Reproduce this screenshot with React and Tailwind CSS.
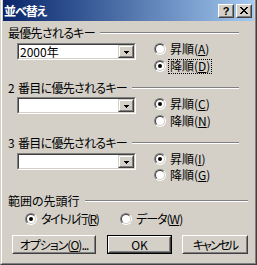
import React from 'react';

function Sunken({ className = '', children }) {
  return (
    <div className={`flex border border-t-[#808080] border-l-[#808080] border-r-white border-b-white ${className}`}>
      <div className="flex flex-1 border border-t-[#404040] border-l-[#404040] border-r-[#d4d0c8] border-b-[#d4d0c8] bg-white">
        {children}
      </div>
    </div>
  );
}

function Arrow() {
  return (
    <svg width="5" height="3" viewBox="0 0 5 3" shapeRendering="crispEdges">
      <rect x="0" y="0" width="5" height="1" fill="#000" />
      <rect x="1" y="1" width="3" height="1" fill="#000" />
      <rect x="2" y="2" width="1" height="1" fill="#000" />
    </svg>
  );
}

function Combo({ value }) {
  return (
    <Sunken className="w-[119px] h-[17px] shrink-0">
      <span className="flex-1 pl-[1px] text-[12px] leading-[13px]">{value}</span>
      <div className="w-[16px] flex border border-t-[#d4d0c8] border-l-[#d4d0c8] border-r-[#404040] border-b-[#404040]">
        <div className="flex-1 flex items-center justify-center pt-[2px] bg-[#d4d0c8] border border-t-white border-l-white border-r-[#808080] border-b-[#808080]">
          <Arrow />
        </div>
      </div>
    </Sunken>
  );
}

function Radio({ checked, focused, labelClass = '', children }) {
  return (
    <div className="flex items-center h-[12px]">
      <span className="relative w-[12px] h-[12px] shrink-0 rounded-full border border-t-[#808080] border-l-[#808080] border-r-white border-b-white">
        <span className="absolute inset-0 flex items-center justify-center rounded-full bg-white border border-t-[#404040] border-l-[#404040] border-r-[#d4d0c8] border-b-[#d4d0c8]">
          {checked && <span className="w-[4px] h-[4px] rounded-full bg-black" />}
        </span>
      </span>
      {focused ? (
        <span className={`ml-[2px] px-[1px] h-[15px] flex items-center border border-dotted border-black whitespace-nowrap ${labelClass}`}>{children}</span>
      ) : (
        <span className={`ml-[4px] whitespace-nowrap ${labelClass}`}>{children}</span>
      )}
    </div>
  );
}

function GroupHeader({ label, labelClass = '', className = '' }) {
  return (
    <div className={`flex items-center ml-[5px] h-[14px] ${className}`}>
      <span className={`whitespace-nowrap ${labelClass}`}>{label}</span>
      <span className="flex-1 ml-[5px] h-[2px] border-t border-t-[#808080] border-b border-b-white" />
    </div>
  );
}

function Button({ isDefault, className = '', children }) {
  const face = (
    <div className="flex-1 flex border border-t-white border-l-white border-r-[#404040] border-b-[#404040]">
      <div className="flex-1 flex items-center justify-center bg-[#d4d0c8] border border-t-[#d4d0c8] border-l-[#d4d0c8] border-r-[#808080] border-b-[#808080]">
        {children}
      </div>
    </div>
  );
  return (
    <div className={`flex h-[19px] ${isDefault ? 'border border-black' : ''} ${className}`}>{face}</div>
  );
}

function TitleButton({ children }) {
  return (
    <div className="w-[16px] h-[14px] flex border border-t-white border-l-white border-r-[#404040] border-b-[#404040]">
      <div className="flex-1 flex items-center justify-center bg-[#d4d0c8] border border-t-[#d4d0c8] border-l-[#d4d0c8] border-r-[#808080] border-b-[#808080]">
        {children}
      </div>
    </div>
  );
}

export default function App() {
  return (
    <div className="w-[257px] h-[265px] flex bg-[#d4d0c8] text-black text-[12px] leading-[14px] font-['Noto_Sans_CJK_JP',sans-serif] [font-feature-settings:'palt'] border-l border-l-[#d4d0c8] border-r border-r-[#404040] border-b border-b-[#404040]">
      <div className="flex-1 flex flex-col pl-[1px] pr-[1px] pb-[1px] border-l border-l-white border-r border-r-[#808080] border-b border-b-[#808080]">
        <div className="h-[21px] flex items-center bg-linear-to-r from-[#0a246a] to-[#a6caf0] pl-[1px] pr-[2px]">
          <span className="flex-1 text-white font-bold tracking-[-1px]">並べ替え</span>
          <TitleButton>
            <span className="font-['Liberation_Sans',sans-serif] font-bold text-[11px] leading-[10px]">?</span>
          </TitleButton>
          <div className="ml-[2px]">
            <TitleButton>
              <svg width="8" height="7" viewBox="0 0 8 7" shapeRendering="crispEdges">
                <path d="M0 0h2v1H0zM6 0h2v1H6zM1 1h2v1H1zM5 1h2v1H5zM2 2h4v1H2zM3 3h2v1H3zM2 4h4v1H2zM1 5h2v1H1zM5 5h2v1H5zM0 6h2v1H0zM6 6h2v1H6z" fill="#000" />
              </svg>
            </TitleButton>
          </div>
        </div>

        <GroupHeader label="最優先されるキー" labelClass="tracking-[-0.7px]" className="mt-[5px] w-[231px]" />
        <div className="flex ml-[14px] mt-[3px]">
          <Combo value="2000年" />
          <div className="ml-[18px] flex flex-col gap-[5px]">
            <Radio>昇順(<u>A</u>)</Radio>
            <Radio checked focused>降順(<u>D</u>)</Radio>
          </div>
        </div>

        <GroupHeader label={<>2<span className="ml-[4px]">番目に優先されるキー</span></>} labelClass="tracking-[-0.7px]" className="mt-[9px] w-[231px]" />
        <div className="flex ml-[14px] mt-[2px]">
          <Combo value="" />
          <div className="ml-[18px] flex flex-col gap-[5px] pt-[1px]">
            <Radio checked>昇順(<u>C</u>)</Radio>
            <Radio>降順(<u>N</u>)</Radio>
          </div>
        </div>

        <GroupHeader label={<>3<span className="ml-[4px]">番目に優先されるキー</span></>} labelClass="tracking-[-0.7px]" className="mt-[9px] w-[231px]" />
        <div className="flex ml-[14px] mt-[3px]">
          <Combo value="" />
          <div className="ml-[18px] flex flex-col gap-[4px]">
            <Radio checked>昇順(<u>I</u>)</Radio>
            <Radio>降順(<u>G</u>)</Radio>
          </div>
        </div>

        <GroupHeader label="範囲の先頭行" className="mt-[13px] w-[240px]" />
        <div className="flex ml-[22px] mt-[5px]">
          <div className="w-[95px]">
            <Radio checked labelClass="tracking-[-1.5px]">タイトル行(<u>R</u>)</Radio>
          </div>
          <Radio labelClass="tracking-[-1px]">データ(<u>W</u>)</Radio>
        </div>

        <div className="flex ml-[9px] mt-[10px]">
          <Button className="w-[84px]"><span className="tracking-[-1px]">オプション(<u>O</u>)...</span></Button>
          <Button isDefault className="w-[65px] ml-[11px]">OK</Button>
          <Button className="w-[66px] ml-[10px]"><span className="tracking-[-2px]">キャンセル</span></Button>
        </div>
      </div>
    </div>
  );
}
